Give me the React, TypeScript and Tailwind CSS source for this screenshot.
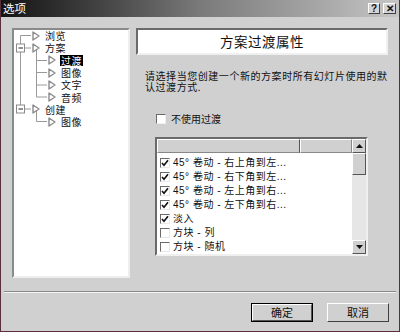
import React from 'react';

const cjk = "font-['Noto_Sans_CJK_SC',sans-serif]";

const Tri = () => (
  <svg width="8" height="10" viewBox="0 0 8 10" className="shrink-0">
    <path d="M1 1 L7 5 L1 9 Z" fill="white" stroke="#8a8a8a" strokeWidth="1.4" strokeLinejoin="round" />
  </svg>
);

const Check = ({ on }: { on: boolean }) => (
  <div className="w-[10px] h-[10px] shrink-0 bg-white border border-t-[#6a6a6a] border-l-[#6a6a6a] border-r-[#e8e8e8] border-b-[#e8e8e8] flex items-center justify-center">
    {on && (
      <svg width="8" height="8" viewBox="0 0 8 8">
        <path d="M1 4 L3 6.3 L7 1.2" fill="none" stroke="#111" strokeWidth="1.6" />
      </svg>
    )}
  </div>
);

interface Node {
  label: string;
  level: number;
  selected?: boolean;
}

const tree: Node[] = [
  { label: '浏览', level: 0 },
  { label: '方案', level: 0 },
  { label: '过渡', level: 1, selected: true },
  { label: '图像', level: 1 },
  { label: '文字', level: 1 },
  { label: '音频', level: 1 },
  { label: '创建', level: 0 },
  { label: '图像', level: 1 },
];

const rows = [
  { text: '45° 卷动 - 右上角到左...', on: true },
  { text: '45° 卷动 - 右下角到左...', on: true },
  { text: '45° 卷动 - 左上角到右...', on: true },
  { text: '45° 卷动 - 左下角到右...', on: true },
  { text: '淡入', on: true },
  { text: '方块 - 列', on: false },
  { text: '方块 - 随机', on: false },
];

const Arrow = ({ up }: { up: boolean }) => (
  <div className="h-[14px] w-[14px] bg-[#d0d0d0] border border-t-white border-l-white border-r-[#555] border-b-[#555] flex items-center justify-center">
    <svg width="7" height="4" viewBox="0 0 7 4">
      <path d={up ? 'M0 4 L3.5 0 L7 4 Z' : 'M0 0 L3.5 4 L7 0 Z'} fill="#111" />
    </svg>
  </div>
);

const App: React.FC = () => {
  return (
    <div className={`w-[400px] h-[332px] bg-[#d0d0d0] border-x border-b border-[#5a2f3c] flex flex-col text-[#111] ${cjk}`}>
      {/* title bar */}
      <div className="h-[17px] flex items-center justify-between pl-[2px] pr-[3px] bg-gradient-to-r from-[#141414] via-[#7a7a7a] to-[#c6c6c6]">
        <span className="text-white text-[11.5px] leading-none">选项</span>
        <div className="flex gap-[3px]">
          <div className="w-[12px] h-[11px] bg-[#d4d4d4] border border-t-white border-l-white border-r-[#404040] border-b-[#404040] flex items-center justify-center text-[10px] font-bold leading-none font-['Liberation_Sans',sans-serif]">?</div>
          <div className="w-[13px] h-[11px] bg-[#d4d4d4] border border-t-white border-l-white border-r-[#404040] border-b-[#404040] flex items-center justify-center text-[10px] font-bold leading-none font-['Liberation_Sans',sans-serif]">✕</div>
        </div>
      </div>

      <div className="flex pt-[11px] pl-[11px]">
        {/* tree panel */}
        <div className="relative w-[118px] h-[250px] bg-white border-2 border-t-[#8a8a8a] border-l-[#8a8a8a] border-r-[#eeeeee] border-b-[#eeeeee]">
          <svg className="absolute left-0 top-0" width="114" height="100">
            <g stroke="#9a9a9a" strokeWidth="1" fill="none">
              <path d="M6.5 5.5 V79" />
              <path d="M6.5 5.5 H17" />
              <path d="M6.5 18 H17" />
              <path d="M6.5 79 H17" />
              <path d="M22.5 18 V67" />
              <path d="M22.5 30.5 H33 M22.5 42.5 H33 M22.5 55 H33 M22.5 67 H33" />
              <path d="M22.5 79 V91.5 H33" />
            </g>
            <g>
              <rect x="2.5" y="14" width="8" height="8" fill="white" stroke="#8a8a8a" />
              <path d="M4.5 18 H9" stroke="#222" />
              <rect x="2.5" y="75" width="8" height="8" fill="white" stroke="#8a8a8a" />
              <path d="M4.5 79 H9" stroke="#222" />
            </g>
          </svg>
          <div className="relative flex flex-col -mt-[0.5px]">
            {tree.map((n, i) => (
              <div key={i} className={`h-[12.3px] flex items-center ${n.level === 0 ? 'pl-[18px]' : 'pl-[34px]'}`}>
                <Tri />
                <span className={`ml-[4px] px-[1px] text-[10px] leading-[11px] tracking-[0.5px] ${n.selected ? 'bg-black text-white' : ''}`}>{n.label}</span>
              </div>
            ))}
          </div>
        </div>

        {/* right side */}
        <div className="ml-[6px] w-[252px] flex flex-col">
          <div className="h-[27px] bg-white border-2 border-t-[#6a6a6a] border-l-[#6a6a6a] border-r-[#f0f0f0] border-b-[#f0f0f0] flex items-center justify-center">
            <span className="text-[13.5px] tracking-[0.5px]">方案过渡属性</span>
          </div>
          <p className="mt-[16px] pl-[9px] text-[10px] leading-[10.5px] tracking-[0.55px] whitespace-nowrap">
            请选择当您创建一个新的方案时所有幻灯片使用的默
            <br />
            认过渡方式.
          </p>

          <div className="mt-[22px] ml-[20px] flex items-center gap-[5px]">
            <div className="w-[10px] h-[10px] bg-white border border-t-[#6a6a6a] border-l-[#6a6a6a] border-r-[#f0f0f0] border-b-[#f0f0f0]" />
            <span className="text-[10px] leading-[10px]">不使用过渡</span>
          </div>

          {/* list */}
          <div className="mt-[13px] ml-[19px] w-[213px] h-[119px] bg-white border-2 border-t-[#6a6a6a] border-l-[#6a6a6a] border-r-[#f0f0f0] border-b-[#f0f0f0] flex">
            <div className="flex-1 flex flex-col">
              <div className="h-[14px] flex bg-[#d0d0d0]">
                <div className="w-[143px] border border-t-white border-l-white border-r-[#555] border-b-[#888]" />
                <div className="flex-1 border border-t-white border-l-white border-r-[#888] border-b-[#888]" />
              </div>
              <div className="pt-[3px] flex flex-col">
                {rows.map((r, i) => (
                  <div key={i} className="h-[14px] flex items-center pl-[3px] gap-[3px]">
                    <Check on={r.on} />
                    <span className="text-[10px] leading-[10px] whitespace-pre font-['Liberation_Sans','Noto_Sans_CJK_SC',sans-serif] tracking-[0.5px]">{r.text}</span>
                  </div>
                ))}
              </div>
            </div>
            <div className="w-[14px] flex flex-col bg-[#e6e6e6]">
              <Arrow up />
              <div className="h-[22px] bg-[#d0d0d0] border border-t-white border-l-white border-r-[#555] border-b-[#555]" />
              <div className="flex-1" />
              <Arrow up={false} />
            </div>
          </div>
        </div>
      </div>

      {/* separator */}
      <div className="mt-[13px] mx-[3px] border-t border-t-[#888] border-b border-b-[#f4f4f4]" />

      {/* buttons */}
      <div className="mt-[10px] flex justify-end pr-[10px] gap-[14px]">
        <div className="w-[62px] h-[19px] border border-black">
          <div className="w-full h-full bg-[#d0d0d0] border border-t-white border-l-white border-r-[#555] border-b-[#555] flex items-center justify-center text-[11px] leading-none">确定</div>
        </div>
        <div className="w-[62px] h-[19px] bg-[#d0d0d0] border border-t-white border-l-white border-r-[#404040] border-b-[#404040] flex items-center justify-center text-[11px] leading-none">取消</div>
      </div>
    </div>
  );
};

export default App;
